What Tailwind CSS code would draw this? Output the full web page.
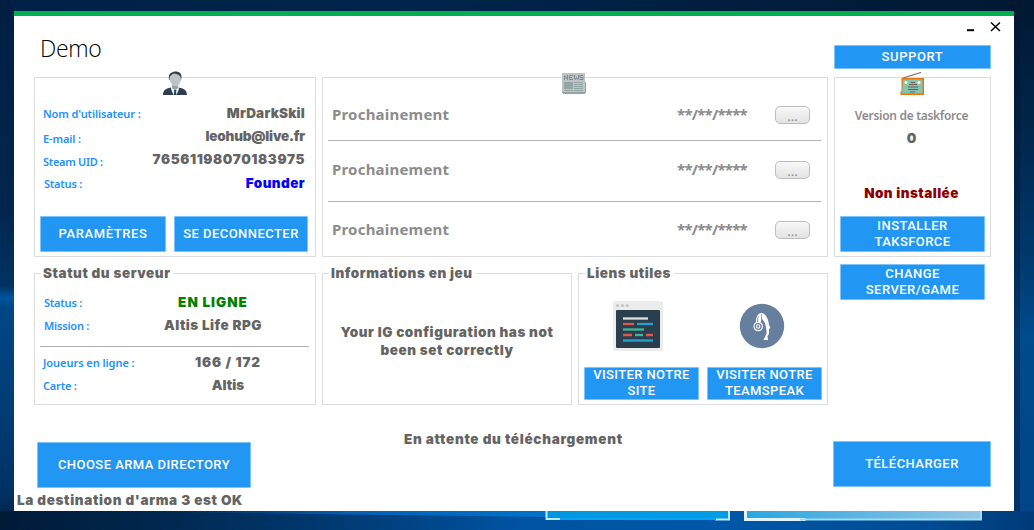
<!DOCTYPE html>
<html lang="fr">
<head>
<meta charset="utf-8">
<title>Demo</title>
<script src="https://cdn.jsdelivr.net/npm/@tailwindcss/browser@4"></script>
</head>
<body class="relative h-[530px] w-[1034px] overflow-hidden bg-[#002850] font-['Inter',sans-serif] text-[#646464]">
<!-- desktop wallpaper -->
<svg class="absolute inset-0" width="1034" height="530" viewBox="0 0 1034 530">
  <defs>
    <linearGradient id="top" x1="0" x2="1" y1="0" y2="0"><stop offset="0" stop-color="#002145"/><stop offset=".4" stop-color="#00254c"/><stop offset="1" stop-color="#001831"/></linearGradient>
    <linearGradient id="left" x1="0" x2="0" y1="0" y2="1"><stop offset="0" stop-color="#001f42"/><stop offset=".4" stop-color="#00264f"/><stop offset=".54" stop-color="#003364"/><stop offset=".562" stop-color="#0054a0"/><stop offset=".58" stop-color="#014686"/><stop offset=".75" stop-color="#003e78"/><stop offset=".93" stop-color="#003264"/><stop offset="1" stop-color="#001b3a"/></linearGradient>
    <linearGradient id="right" x1="0" x2="0" y1="0" y2="1"><stop offset="0" stop-color="#001831"/><stop offset=".25" stop-color="#00264b"/><stop offset=".5" stop-color="#003a70"/><stop offset=".63" stop-color="#004b8c"/><stop offset=".85" stop-color="#00478a"/><stop offset="1" stop-color="#00448a"/></linearGradient>
    <linearGradient id="bot" x1="0" x2="1" y1="0" y2="0"><stop offset="0" stop-color="#001a38"/><stop offset=".15" stop-color="#00274e"/><stop offset=".35" stop-color="#003d78"/><stop offset=".5" stop-color="#0053a2"/><stop offset=".7" stop-color="#0057a8"/><stop offset=".9" stop-color="#004b92"/><stop offset="1" stop-color="#003b78"/></linearGradient>
    <linearGradient id="ray" x1="0" x2="1" y1="0" y2="0"><stop offset="0" stop-color="#003a72" stop-opacity="0"/><stop offset=".5" stop-color="#0062b8"/><stop offset="1" stop-color="#0072cc"/></linearGradient>
    <linearGradient id="p1" x1="0" x2="1" y1="0" y2="0"><stop offset="0" stop-color="#0096e0"/><stop offset="1" stop-color="#009ee6"/></linearGradient>
    <linearGradient id="p2" x1="0" x2="1" y1="0" y2="0"><stop offset="0" stop-color="#29a6e0"/><stop offset="1" stop-color="#94c5e4"/></linearGradient>
  </defs>
  <rect width="1034" height="530" fill="url(#top)"/>
  <rect width="14" height="530" fill="url(#left)"/>
  <rect x="1014" width="20" height="530" fill="url(#right)"/>
  <rect x="1014" y="11" width="6" height="506" fill="#001633" opacity=".4"/>
  <rect y="511" width="1034" height="19" fill="url(#bot)"/>
  <path d="M150 511h396v6L150 512z" fill="url(#ray)"/>
  <path d="M546 511h184v9H546z" fill="url(#p1)"/>
  <path d="M546.500 511v8h14M715 519.500h14v-8.500" fill="none" stroke="#b9ecff" stroke-width="2"/>
  <path d="M560 519h156" stroke="#0aa0f5" stroke-width="2"/>
  <path d="M744 511h238v9H744z" fill="url(#p2)"/>
  <path d="M745.500 511v8.500h60" fill="none" stroke="#e0f6ff" stroke-width="3"/>
  <path d="M800 519.500h181v-8.500" fill="none" stroke="#9bdcfa" stroke-width="2"/>
</svg>

<main class="relative ml-[14px] mt-[11px] flex h-[500px] w-[1000px] border-t-5 border-[#00b050] bg-white pl-[3px]">
  <div class="flex w-[811px] flex-col">
    <h1 class="ml-[23px] h-[61px] pt-[14px] font-['Open_Sans',sans-serif] text-[23px] leading-[37px] font-light tracking-[-0.3px] text-black">Demo</h1>

    <div class="ml-[17px] flex gap-[6px]">
      <!-- account -->
      <section class="relative h-[180px] w-[282px] border border-[#dcdcdc]">
        <svg class="absolute left-[128px] top-[-7px]" width="24" height="24" viewBox="0 0 24 24">
          <path d="M6 9C5 3 8 2 9 1.500 11 0 15 0 17 2c1.500 1 2 4 1 7z" fill="#2c3e50"/>
          <path d="M9 14h6v4l-3 3-3-3z" fill="#95a5a5"/>
          <path d="M7 5.500C8 4 10 2.500 11 2.500c2 .5 4 .5 6 2.500.7 1 .5 1.500 1 3-.5 4-3 8-5.500 8S7.500 12 6.300 8c.3-1 .2-1.500.7-2.500z" fill="#bdc3c7"/>
          <path d="M0 24c.3-5 2-6 8-7.500l4 7.500 3.500-7.500C22 18 23.500 19 24 24z" fill="#2c3e50"/>
          <path d="M8.500 16.500 12 19l3.500-2.500.5 1.500-2.500 6h-3L8 18z" fill="#ecf0f1"/>
          <path d="M9 15h6.500l-1 2.500L12 19l-2.500-1.500z" fill="#95a5a5"/>
          <path d="M11 19h2.500l-.5 2 .6 3h-3l.7-3z" fill="#2c3e50"/>
        </svg>
        <div class="flex justify-between pl-[8px] pr-[10px]">
          <div class="pt-[26px] font-['Noto_Sans',sans-serif] text-[11px] leading-5 font-semibold text-[#1e90ff]">
            <p class="tracking-[-0.1px]">Nom d'utilisateur :</p>
            <p class="mt-[5px] tracking-[-0.1px]">E-mail :</p>
            <p class="mt-[3px] tracking-[-0.3px]">Steam UID :</p>
            <p class="mt-[2px] ml-px tracking-[-0.2px]">Status :</p>
          </div>
          <div class="pt-[25px] text-right text-[13.500px] leading-5 font-black">
            <p class="tracking-[0.2px]">MrDarkSkil</p>
            <p class="mt-[3px] tracking-[-0.2px]">leohub@live.fr</p>
            <p class="mt-[3px] tracking-[0.600px]">76561198070183975</p>
            <p class="mt-[4px] tracking-[0.400px] text-[#0000ff]">Founder</p>
          </div>
        </div>
        <div class="mt-[22px] ml-[5px] flex gap-[8px] font-['Roboto',sans-serif] text-[13px] font-medium text-white">
          <button class="h-[36px] w-[126px] rounded-[1px] border border-[#7cc3fa] bg-[#2196f3] tracking-[0.600px]">PARAMÈTRES</button>
          <button class="h-[36px] w-[134px] rounded-[1px] border border-[#7cc3fa] bg-[#2196f3] tracking-[0.450px] whitespace-nowrap">SE DECONNECTER</button>
        </div>
      </section>

      <!-- news -->
      <section class="relative h-[180px] w-[506px] border border-[#dcdcdc] pr-[6px] pl-[5px] font-['Noto_Sans',sans-serif] text-[15px] font-bold text-[#8c8c8c]">
        <svg class="absolute left-[239px] top-[-5px]" width="24" height="21" viewBox="0 0 24 21" shape-rendering="crispEdges">
          <path d="M1 0h22v9h1v11h-1v1H1v-1H0V0z" fill="#95a5a6"/>
          <path d="M0 0h23v19H0z" fill="#bdc3c7"/>
          <path d="M2 9h9v7H2zM12 9h9v1h-9zM12 11h9v1h-9zM12 13h9v1h-9zM12 15h9v1h-9zM2 17h9v1H2zM12 17h9v1h-9z" fill="#95a5a6"/>
          <path d="M2.500 7V2.500M3 3l2.500 3M5.500 7V2M11 2.500H7.500v4H11M7.500 4.500H10M12.500 2v4l1 .5 1-2 1 2 1-.5V2M21 2.500h-3v2h3v2h-3.500" fill="none" stroke="#7f8c8d" shape-rendering="auto"/>
        </svg>
        <div class="flex h-[63px] items-center border-b border-[#b4b4b4] pt-[12px] pl-[4px]">
          <span class="-mt-[2px] w-[345px] tracking-[0.200px]">Prochainement</span><span class="-mt-[2px] w-[98px] tracking-[-0.750px]">**/**/****</span>
          <button class="h-[18px] w-[35px] rounded-[5px] border border-[#bebebe] bg-linear-to-b from-[#f8f8f8] to-[#e3e3e3] text-[13px] leading-[18px] font-normal">...</button>
        </div>
        <div class="flex h-[61px] items-center border-b border-[#b4b4b4] pb-[2px] pl-[4px]">
          <span class="-mt-[2px] w-[345px] tracking-[0.200px]">Prochainement</span><span class="-mt-[2px] w-[98px] tracking-[-0.750px]">**/**/****</span>
          <button class="h-[18px] w-[35px] rounded-[5px] border border-[#bebebe] bg-linear-to-b from-[#f8f8f8] to-[#e3e3e3] text-[13px] leading-[18px] font-normal">...</button>
        </div>
        <div class="flex h-[54px] items-center pt-[2px] pl-[4px]">
          <span class="-mt-[2px] w-[345px] tracking-[0.200px]">Prochainement</span><span class="-mt-[2px] w-[98px] tracking-[-0.750px]">**/**/****</span>
          <button class="h-[18px] w-[35px] rounded-[5px] border border-[#bebebe] bg-linear-to-b from-[#f8f8f8] to-[#e3e3e3] text-[13px] leading-[18px] font-normal">...</button>
        </div>
      </section>
    </div>

    <div class="mt-[16px] ml-[17px] flex gap-[6px] text-[13.500px] leading-[18px] font-black tracking-[0.550px]">
      <!-- server status -->
      <section class="relative h-[132px] w-[282px] border border-[#dcdcdc] pr-[6px] pl-[5px]">
        <h2 class="absolute left-[6px] top-[-10px] bg-white pl-[2px] pr-[2px] whitespace-nowrap">Statut du serveur</h2>
        <div class="flex h-[73px] border-b border-[#b4b4b4] pl-[4px]">
          <div class="w-[100px] pt-[19px] font-['Noto_Sans',sans-serif] text-[11px] leading-5 font-semibold tracking-[-0.2px] text-[#1e90ff]">
            <p>Status :</p><p class="mt-[3px]">Mission :</p>
          </div>
          <div class="w-[138px] pt-[18px] text-center leading-5 tracking-[0.500px]">
            <p class="tracking-[1px] text-[#008000]">EN LIGNE</p><p class="mt-[3px]">Altis Life RPG</p>
          </div>
        </div>
        <div class="flex pl-[3px]">
          <div class="w-[120px] pt-[6px] font-['Noto_Sans',sans-serif] text-[11px] leading-5 font-semibold tracking-[-0.05px] text-[#1e90ff]">
            <p>Joueurs en ligne :</p><p class="mt-[3px] tracking-[-0.2px]">Carte :</p>
          </div>
          <div class="w-[130px] pt-[5px] text-center leading-5">
            <p class="tracking-[0.850px]">166 / 172</p><p class="mt-[3px] tracking-[0.100px]">Altis</p>
          </div>
        </div>
      </section>

      <!-- in-game information -->
      <section class="relative flex h-[132px] w-[250px] items-center justify-center border border-[#dcdcdc] pt-[4px] text-center">
        <h2 class="absolute left-[6px] top-[-10px] bg-white pl-[2px] pr-[3px] whitespace-nowrap">Informations en jeu</h2>
        <p class="whitespace-nowrap">Your IG configuration has not<br>been set correctly</p>
      </section>

      <!-- links -->
      <section class="relative h-[132px] w-[250px] border border-[#dcdcdc] px-[5px]">
        <h2 class="absolute left-[6px] top-[-10px] bg-white pl-[2px] pr-[3px] whitespace-nowrap">Liens utiles</h2>
        <div class="flex gap-[8px] pt-[27px]">
          <div class="flex w-[115px] flex-col items-center">
            <svg class="ml-[-7px]" width="50" height="50" viewBox="0 0 50 50">
              <rect width="50" height="50" rx="2" fill="#ececec"/>
              <circle cx="4.500" cy="4.500" r="1.600" fill="#c3c7c9"/><circle cx="9.500" cy="4.500" r="1.600" fill="#c3c7c9"/><circle cx="14.200" cy="4.500" r="1.600" fill="#c3c7c9"/>
              <rect x="3" y="9" width="44" height="38" rx="1" fill="#2b3e4c"/>
              <g stroke-width="2.300"><path d="M10 17.500h25" stroke="#dfe4e5"/><path d="M10 23h11" stroke="#e2574c"/><path d="M24 23h16" stroke="#27a0cf"/><path d="M10 28.500h21" stroke="#44b39d"/><path d="M10 34h9M33 34h7" stroke="#e2574c"/><path d="M22 34h8" stroke="#44b39d"/><path d="M10 39.500h30" stroke="#27a0cf"/></g>
            </svg>
          </div>
          <div class="flex w-[115px] flex-col items-center">
            <svg class="mt-[2px] ml-[-6px]" width="46" height="46" viewBox="0 0 46 46">
              <circle cx="23" cy="23" r="22.200" fill="#667f9f"/>
              <path d="M23 10c4 1 6.500 6 7 12l1.500 3-1.500 1v3c0 2-.5 3-1.500 4l.5 4h-4.500c1-3 3.500-5 3-9-.5-6-2-10-4.500-12z" fill="#fff"/>
              <path d="M19.500 12 22.500 10l-.5 9h-3z" fill="#fff"/>
              <path d="M17.500 19c0-6 2-8.500 5.500-8.500" fill="none" stroke="#fff" stroke-width="1.200"/>
              <circle cx="19.200" cy="23.500" r="4.200" fill="#667f9f" stroke="#fff" stroke-width="1.200"/><circle cx="19.200" cy="23.500" r="1.700" fill="none" stroke="#fff" stroke-width="1.100"/>
            </svg>
          </div>
        </div>
        <div class="mt-[16px] flex gap-[8px] font-['Roboto',sans-serif] text-[13px] leading-[16px] font-medium tracking-[0.400px] text-white">
          <button class="h-[33px] w-[115px] rounded-[1px] border border-[#7cc3fa] bg-[#2196f3] whitespace-nowrap"><span class="-mt-[2px] block">VISITER NOTRE<br>SITE</span></button>
          <button class="h-[33px] w-[115px] rounded-[1px] border border-[#7cc3fa] bg-[#2196f3] whitespace-nowrap"><span class="-mt-[2px] block">VISITER NOTRE<br>TEAMSPEAK</span></button>
        </div>
      </section>
    </div>

    <p class="mt-[25px] ml-[387px] text-[13.500px] leading-[18px] font-black tracking-[0.700px]">En attente du téléchargement</p>
    <button class="mt-[-6px] ml-[20px] h-[46px] w-[214px] rounded-[1px] border border-[#7cc3fa] bg-[#2196f3] font-['Roboto',sans-serif] text-[13px] font-medium tracking-[0.450px] text-white">CHOOSE ARMA DIRECTORY</button>
    <p class="mt-[3px] text-[13.500px] leading-[18px] font-black tracking-[0.650px]">La destination d'arma 3 est OK</p>
  </div>

  <!-- right column -->
  <aside class="ml-[6px] w-[157px] font-['Roboto',sans-serif] text-[13px] leading-[16px] font-medium tracking-[0.450px] text-white">
    <div class="flex h-[29px] items-start justify-end">
      <svg class="mt-[4px] mr-[-11px]" width="36" height="14" viewBox="0 0 36 14"><path d="M1 10.200h7" stroke="#000" stroke-width="2"/><path d="m25 2.500 9 8.500M34 2.500 25 11" stroke="#000" stroke-width="1.500"/></svg>
    </div>
    <button class="block h-[24px] w-[157px] rounded-[1px] border border-[#7cc3fa] bg-[#2196f3] tracking-[0.600px]">SUPPORT</button>
    <section class="relative mt-[8px] flex h-[180px] flex-col items-center border border-[#dcdcdc]">
      <svg class="absolute left-[65px] top-[-6px]" width="24" height="24" viewBox="0 0 24 24">
        <path d="m3 6 18-5.500" stroke="#806a60" stroke-width="1.200"/>
        <path d="M1.500 6H24v17H.500v-3l1-1z" fill="#e97410"/>
        <path d="M3 7.500h19.500V21.500H2z" fill="#84c5b0"/>
        <circle cx="6" cy="10.500" r="1.600" fill="#fdf5e0"/><circle cx="19" cy="10.500" r="1.600" fill="#fdf5e0"/>
        <path d="M11 10.500h4M9 12.500h8M8 15h10M8 17.500h10M10 20h5" stroke="#735c55" stroke-width="1.200"/>
      </svg>
      <p class="mt-[28px] mr-[2px] font-['Noto_Sans',sans-serif] text-[12px] leading-5 font-semibold tracking-[-0.300px] text-[#8c8c8c]">Version de taskforce</p>
      <p class="mt-[2px] mr-[2px] font-['Inter',sans-serif] text-[13.500px] leading-5 font-black tracking-normal text-[#646464]">0</p>
      <p class="mt-[35px] mr-[2px] font-['Inter',sans-serif] text-[13.500px] leading-5 font-black tracking-[0.450px] text-[#8b0000]">Non installée</p>
      <button class="mt-[13px] h-[36px] w-[145px] rounded-[1px] border border-[#7cc3fa] bg-[#2196f3]">INSTALLER<br>TAKSFORCE</button>
    </section>
    <button class="mt-[7px] ml-[6px] block h-[36px] w-[145px] rounded-[1px] border border-[#7cc3fa] bg-[#2196f3]">CHANGE<br>SERVER/GAME</button>
    <button class="mt-[141px] ml-[-1px] block h-[46px] w-[158px] rounded-[1px] border border-[#7cc3fa] bg-[#2196f3]">TÉLÉCHARGER</button>
  </aside>
</main>
</body>
</html>
